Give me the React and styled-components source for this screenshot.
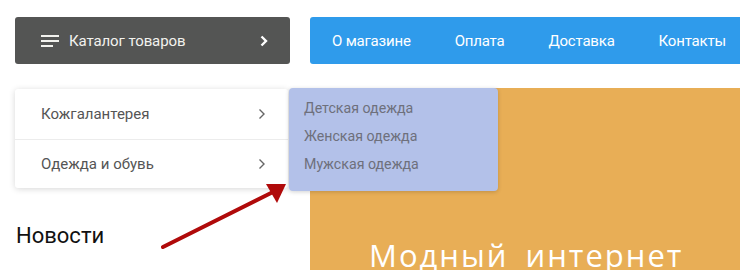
import React from "react";
import styled, { createGlobalStyle } from "styled-components";

const GlobalStyle = createGlobalStyle`
  body {
    margin: 0;
    background: #fff;
    font-family: Roboto, "Liberation Sans", sans-serif;
  }
`;

const Page = styled.div`
  position: relative;
  width: 740px;
  height: 270px;
  overflow: hidden;
  padding: 17px 0 0 15px;
  box-sizing: border-box;
`;

const Header = styled.div`
  display: flex;
  height: 47px;
  width: 800px;
`;

const CatalogButton = styled.button`
  display: flex;
  align-items: center;
  width: 275px;
  height: 100%;
  padding: 0 22px 0 26px;
  box-sizing: border-box;
  border: none;
  border-radius: 3px;
  background: #545554;
  color: #f2f2ee;
  font-family: inherit;
  font-size: 15px;
  letter-spacing: -0.1px;
  cursor: pointer;
`;

const CatalogLabel = styled.span`
  flex: 1;
  text-align: left;
  margin-left: 10px;
`;

const Nav = styled.nav`
  display: flex;
  align-items: center;
  flex: 1;
  margin-left: 20px;
  border-radius: 3px;
  background: #2f9beb;
`;

const NavLink = styled.a`
  padding: 0 22px;
  color: #fff;
  font-size: 15px;
  letter-spacing: -0.2px;
  text-decoration: none;
`;

const Body = styled.div`
  display: grid;
  grid-template-columns: 295px 1fr;
  margin-top: 24px;
`;

const Sidebar = styled.div`
  position: relative;
`;

const Dropdown = styled.div`
  position: relative;
  width: 273px;
  margin-top: 1px;
  background: #fff;
  border-radius: 3px;
  box-shadow: 0 1px 6px rgba(0, 0, 0, 0.16);
`;

const MenuRow = styled.div`
  display: flex;
  align-items: center;
  justify-content: space-between;
  height: ${(p) => p.$h}px;
  padding: 0 22px 0 26px;
  color: #555;
  font-size: 15px;
  border-top: ${(p) => (p.$first ? "none" : "1px solid #ececec")};
`;

const Submenu = styled.div`
  position: absolute;
  left: 274px;
  top: -1px;
  width: 209px;
  height: 103px;
  padding: 8px 0 0 15px;
  box-sizing: border-box;
  background: #b3c1e9;
  border-radius: 4px;
  box-shadow: 0 1px 4px rgba(0, 0, 0, 0.18);
  z-index: 2;
`;

const SubItem = styled.div`
  height: 28px;
  line-height: 24px;
  color: #6e707c;
  font-size: 14.2px;
`;

const NewsTitle = styled.h2`
  margin: 37px 0 0 1px;
  font-size: 22px;
  font-weight: 400;
  line-height: 1;
  color: #111;
`;

const Banner = styled.div`
  height: 200px;
  width: 430px;
  padding: 152px 0 0 59px;
  box-sizing: border-box;
  background: #e8ae56;
`;

const BannerText = styled.div`
  font-family: "Open Sans", sans-serif;
  font-size: 31px;
  line-height: 1;
  letter-spacing: 2px;
  word-spacing: 7px;
  color: #fff;
  white-space: nowrap;
`;

const ArrowOverlay = styled.svg`
  position: absolute;
  left: 0;
  top: 0;
  z-index: 3;
  pointer-events: none;
`;

const Burger = () => (
  <svg width="18" height="14" viewBox="0 0 18 14">
    <rect x="0" y="1" width="18" height="2" fill="#f2f2ee" />
    <rect x="0" y="6" width="18" height="2" fill="#f2f2ee" />
    <rect x="0" y="11" width="12" height="2" fill="#f2f2ee" />
  </svg>
);

const Chevron = ({ color, width }) => (
  <svg width="8" height="12" viewBox="0 0 8 12">
    <path d="M1.5 1.5 L6 6 L1.5 10.5" fill="none" stroke={color} strokeWidth={width} />
  </svg>
);

const navItems = ["О магазине", "Оплата", "Доставка", "Контакты"];
const subItems = ["Детская одежда", "Женская одежда", "Мужская одежда"];

export default function App() {
  return (
    <>
      <GlobalStyle />
      <Page>
        <Header>
          <CatalogButton>
            <Burger />
            <CatalogLabel>Каталог товаров</CatalogLabel>
            <Chevron color="#fff" width={2.4} />
          </CatalogButton>
          <Nav>
            {navItems.map((item) => (
              <NavLink key={item} href="#">
                {item}
              </NavLink>
            ))}
          </Nav>
        </Header>
        <Body>
          <Sidebar>
            <Dropdown>
              <MenuRow $first $h={50}>
                Кожгалантерея
                <Chevron color="#666" width={1.4} />
              </MenuRow>
              <MenuRow $h={48}>
                Одежда и обувь
                <Chevron color="#666" width={1.4} />
              </MenuRow>
              <Submenu>
                {subItems.map((item) => (
                  <SubItem key={item}>{item}</SubItem>
                ))}
              </Submenu>
            </Dropdown>
            <NewsTitle>Новости</NewsTitle>
          </Sidebar>
          <Banner>
            <BannerText>Модный интернет</BannerText>
          </Banner>
        </Body>
        <ArrowOverlay width="740" height="270" viewBox="0 0 740 270">
          <line x1="163" y1="247" x2="273" y2="192" stroke="#b00a0a" strokeWidth="4" strokeLinecap="round" />
          <polygon points="286,184 266,184 277,203" fill="#b00a0a" />
        </ArrowOverlay>
      </Page>
    </>
  );
}
